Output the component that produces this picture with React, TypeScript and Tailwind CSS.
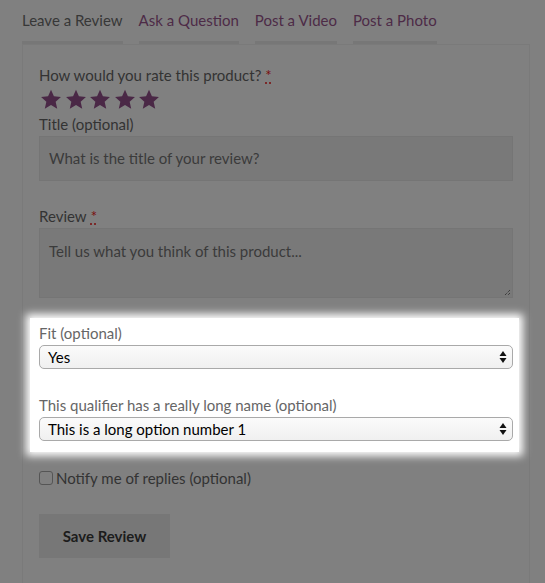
import React from "react";

const tabs = [
  { label: "Leave a Review", active: true },
  { label: "Ask a Question" },
  { label: "Post a Video" },
  { label: "Post a Photo" },
];

function Star() {
  return (
    <svg width="22" height="21" viewBox="0 0 24 23" className="shrink-0">
      <path
        d="M12 0.8l3.2 7.1 7.7.8-5.8 5.2 1.7 7.6L12 17.6l-6.8 3.9 1.7-7.6L1.1 8.7l7.7-.8z"
        fill="#4a2846"
      />
    </svg>
  );
}

function Req() {
  return (
    <span className="ml-[4px] text-[#7a0d0d] underline decoration-dotted decoration-[#7a0d0d] underline-offset-2">
      *
    </span>
  );
}

function SelectBox({ value }: { value: string }) {
  return (
    <div className="h-[24px] flex items-center justify-between rounded-[5px] border border-[#a9a9a9] bg-gradient-to-b from-[#fbfbfb] to-[#f0f0f0] pl-[8px] pr-[5px] text-[15px] text-black">
      <span>{value}</span>
      <svg width="8" height="14" viewBox="0 0 8 14">
        <path d="M4 1L7.5 6H0.5z" fill="#111" />
        <path d="M4 13L7.5 8H0.5z" fill="#111" />
      </svg>
    </div>
  );
}

export default function App() {
  return (
    <div
      className="w-[545px] h-[583px] overflow-hidden bg-[#808080] text-[15px] text-[#333]"
      style={{ fontFamily: "Lato, 'Open Sans', sans-serif" }}
    >
      <div className="flex gap-[16px] pl-[22px] pt-[9px]">
        {tabs.map((t) => (
          <div key={t.label} className="flex flex-col">
            <span className={`leading-[22px] ${t.active ? "text-[#373737]" : "text-[#4d2b47]"}`}>
              {t.label}
            </span>
            <span className="mt-[10px] h-[3px] bg-[#777]" />
          </div>
        ))}
      </div>

      <div className="ml-[22px] w-[508px] h-[560px] border border-[#7a7a7a] pt-[20px] pl-[16px] pr-[16px]">
        <div className="leading-[20px]">
          How would you rate this product?<Req />
        </div>
        <div className="flex gap-[2.5px] mt-[4px] ml-[1px]">
          <Star />
          <Star />
          <Star />
          <Star />
          <Star />
        </div>
        <div className="leading-[20px] mt-[4px]">Title (optional)</div>
        <div className="mt-[2px] h-[45px] bg-[#797979] border border-[#757575] flex items-center pl-[9px] text-[#3b3b3b]">
          What is the title of your review?
        </div>

        <div className="leading-[20px] mt-[25px]">
          Review<Req />
        </div>
        <div className="relative mt-[2px] h-[70px] bg-[#797979] border border-[#757575] pt-[11px] pl-[9px] text-[#3b3b3b]">
          Tell us what you think of this product...
          <svg width="7" height="7" viewBox="0 0 7 7" className="absolute right-[1px] bottom-[1px]">
            <path d="M6 1L1 6M6 4L4 6" stroke="#222" strokeWidth="1" strokeDasharray="1 1" />
          </svg>
        </div>

        <div className="-ml-[9px] mr-[-6px] mt-[20px] bg-white shadow-[0_0_8px_4px_#ffffff] pl-[9px] pr-[6px] pt-[5px] pb-[11px] text-[#666]">
          <div className="leading-[20px]">Fit (optional)</div>
          <div className="mt-[2px]">
            <SelectBox value="Yes" />
          </div>
          <div className="leading-[20px] mt-[26px]">This qualifier has a really long name (optional)</div>
          <div className="mt-[2px]">
            <SelectBox value="This is a long option number 1" />
          </div>
        </div>

        <label className="flex items-center mt-[16px] leading-[20px]">
          <span className="w-[14px] h-[14px] rounded-[3px] border border-[#555] mr-[3px]" />
          Notify me of replies (optional)
        </label>

        <div className="mt-[26px] w-[131px] h-[44px] bg-[#777] flex items-center justify-center font-bold text-[#1c1c1c]">
          Save Review
        </div>
      </div>
    </div>
  );
}
